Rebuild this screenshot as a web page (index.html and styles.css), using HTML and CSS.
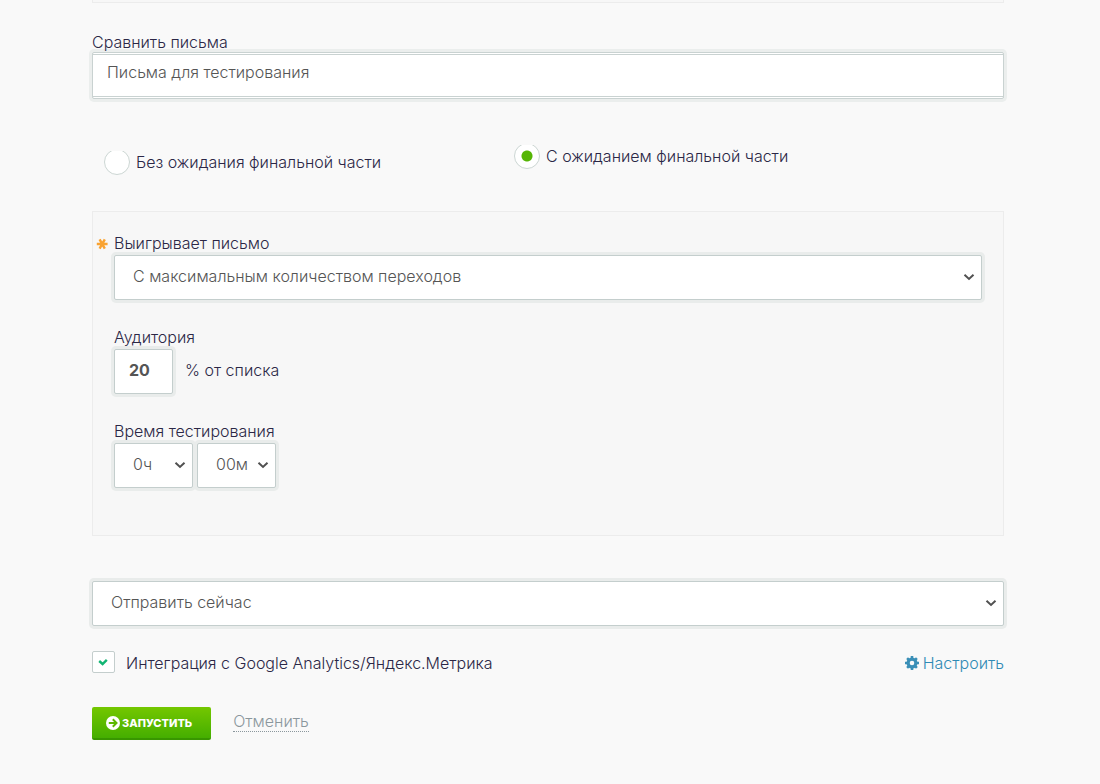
FILE: index.html
```html
<!DOCTYPE html>
<html lang="ru">
<head>
<meta charset="utf-8">
<title>Сравнить письма</title>
<link rel="stylesheet" href="styles.css">
</head>
<body>
<svg class="defs" aria-hidden="true">
  <symbol id="chevron" viewBox="0 0 12 8"><path d="M1.500 1.800 6 5.900 10.500 1.800" fill="none" stroke="#505050" stroke-width="2"/></symbol>
</svg>
<form class="page">
  <div class="previous"></div>

  <div class="field">
    <label class="label" for="letters">Сравнить письма</label>
    <div class="frame"><input class="frame-input" id="letters" type="text" value="Письма для тестирования"></div>
  </div>

  <div class="modes">
    <label class="mode mode-low"><input class="radio" type="radio" name="mode">Без ожидания финальной части</label>
    <label class="mode"><input class="radio" type="radio" name="mode" checked>С ожиданием финальной части</label>
  </div>

  <section class="panel">
    <div class="field">
      <label class="label" for="winner"><svg class="star" viewBox="0 0 12 12" aria-hidden="true"><path d="M.8 6h10.800M3.600 1.300l5.200 9.400M8.800 1.300 3.600 10.700" stroke="#f9a332" stroke-width="2.400"/></svg>Выигрывает письмо</label>
      <div class="select">
        <select class="control" id="winner"><option>С максимальным количеством переходов</option></select>
        <svg class="chevron" aria-hidden="true"><use href="#chevron"/></svg>
      </div>
    </div>
    <div class="field">
      <label class="label" for="share">Аудитория</label>
      <div class="row">
        <input class="control share" id="share" type="text" value="20">
        <span class="suffix">% от списка</span>
      </div>
    </div>
    <div class="field">
      <label class="label" for="hours">Время тестирования</label>
      <div class="row times">
        <div class="select time">
          <select class="control" id="hours"><option>0ч</option></select>
          <svg class="chevron" aria-hidden="true"><use href="#chevron"/></svg>
        </div>
        <div class="select time">
          <select class="control" id="minutes" aria-label="Минуты"><option>00м</option></select>
          <svg class="chevron" aria-hidden="true"><use href="#chevron"/></svg>
        </div>
      </div>
    </div>
  </section>

  <div class="select send">
    <select class="control" aria-label="Время отправки"><option>Отправить сейчас</option></select>
    <svg class="chevron" aria-hidden="true"><use href="#chevron"/></svg>
  </div>

  <div class="integration">
    <label class="check-label">
      <span class="check-box">
        <input class="check" type="checkbox" checked>
        <svg class="tick" viewBox="0 0 10 8" aria-hidden="true"><path d="M1.200 3 4.600 6 8.800 1.800" fill="none" stroke="#12b573" stroke-width="2.400"/></svg>
      </span>Интеграция с Google Analytics/Яндекс.Метрика</label>
    <a class="configure" href="#"><svg class="gear" viewBox="0 0 14 14" aria-hidden="true"><circle cx="7" cy="7" r="3.900" fill="none" stroke="#3a8fb7" stroke-width="3.200"/><path d="M7 0v3M7 11v3M0 7h3M11 7h3M2.100 2.100l2 2M9.900 9.900l2 2M2.100 11.900l2-2M9.900 4.100l2-2" stroke="#3a8fb7" stroke-width="2.600"/></svg>Настроить</a>
  </div>

  <div class="actions">
    <button class="launch" type="button"><svg class="arrow" viewBox="0 0 14 14" aria-hidden="true"><circle cx="7" cy="7" r="7" fill="#fff"/><path d="M2.800 7h7.200M6.800 3.300 10.500 7 6.800 10.700" fill="none" stroke="#5cb800" stroke-width="2"/></svg>ЗАПУСТИТЬ</button>
    <a class="cancel" href="#">Отменить</a>
  </div>
</form>
</body>
</html>
```
FILE: styles.css
```css
* { box-sizing: border-box; }

body {
  margin: 0;
  background: #f9f9f9;
  color: #2b2746;
  font: 300 16px/20px Inter, "Noto Sans", sans-serif;
}

.defs { display: none; }

.page { padding: 0 96px 40px 92px; }

.previous {
  height: 3px;
  border: 1px solid #ececec;
  border-top: 0;
  background: #f7f7f7;
}

.page > .field { margin-top: 29px; }

/* Keeps descenders above the glow of the control below. */
.label {
  display: block;
  position: relative;
  z-index: 1;
}

.frame {
  padding: 1px 0;
  border: 1px solid #c9d2d1;
  border-radius: 2px;
  background: #fff;
  box-shadow: 0 0 0 3px #ebeeed;
}

.frame-input {
  display: block;
  width: 100%;
  height: 43px;
  padding: 0 14px 8px;
  border: solid #c9d2d1;
  border-width: 1px 0;
  background: #fff;
  color: #555;
  font: inherit;
}

.modes {
  display: grid;
  grid-template-columns: 410px 1fr;
  align-items: start;
  padding: 44px 12px 0;
}

.mode {
  display: flex;
  align-items: center;
  gap: 6px;
}

.mode-low { margin-top: 6px; }

.radio {
  appearance: none;
  width: 26px;
  height: 26px;
  margin: 0;
  border: 1px solid #ccd6d3;
  border-radius: 50%;
  background: #fff;
  clip-path: inset(2px 0 0);
}

.radio:checked { background: radial-gradient(circle, #55b505 5px, #fff 6px); }

.panel {
  display: grid;
  gap: 27px;
  margin-top: 36px;
  padding: 21px 21px 47px;
  border: 1px solid #ececec;
  background: #f7f7f7;
}

.panel .label { padding-bottom: 2px; }

.star {
  position: absolute;
  left: -18px;
  top: 5px;
  width: 12px;
  height: 12px;
}

.select { position: relative; }

.control {
  display: block;
  appearance: none;
  width: 100%;
  height: 45px;
  padding: 0 18px 4px;
  border: 1px solid #c4cecd;
  border-radius: 2px;
  background: #fff;
  box-shadow: 0 0 0 3px #e9eceb;
  color: #555;
  font: inherit;
}

.chevron {
  position: absolute;
  right: 7px;
  top: 18px;
  width: 12px;
  height: 8px;
  pointer-events: none;
}

.row {
  display: flex;
  align-items: center;
}

.share {
  width: 59px;
  padding: 0 14px 4px;
  font-weight: 700;
}

.suffix { padding: 0 12px 4px; }

.times { gap: 4px; }

.time { width: 79px; }

.send { margin-top: 45px; }

.integration {
  display: flex;
  justify-content: space-between;
  align-items: flex-end;
  margin-top: 25px;
}

.check-label {
  display: flex;
  align-items: flex-end;
  gap: 11px;
}

.check-box {
  position: relative;
  display: block;
}

.check {
  display: block;
  appearance: none;
  width: 23px;
  height: 22px;
  margin: 0;
  border: 1px solid #c4cecd;
  border-radius: 2px;
  background: #fff;
}

.tick {
  position: absolute;
  left: 6px;
  top: 7px;
  width: 10px;
  height: 8px;
}

.configure {
  display: flex;
  align-items: center;
  gap: 4px;
  color: #2f8ab5;
  text-decoration: none;
}

.gear {
  width: 14px;
  height: 14px;
}

.actions {
  display: flex;
  align-items: center;
  gap: 22px;
  margin-top: 34px;
}

.launch {
  display: flex;
  align-items: center;
  gap: 2px;
  height: 33px;
  padding: 0 19px 0 14px;
  border: 0;
  border-bottom: 2px solid #389600;
  border-radius: 2px;
  background: linear-gradient(#74c700, #45ae00);
  color: #fff;
  font: 800 11px/16px Inter, "Noto Sans", sans-serif;
}

.arrow {
  width: 14px;
  height: 14px;
}

.cancel {
  margin-bottom: 4px;
  border-bottom: 1px dotted #8b979d;
  color: #8b979d;
  line-height: 19px;
  text-decoration: none;
}
```
